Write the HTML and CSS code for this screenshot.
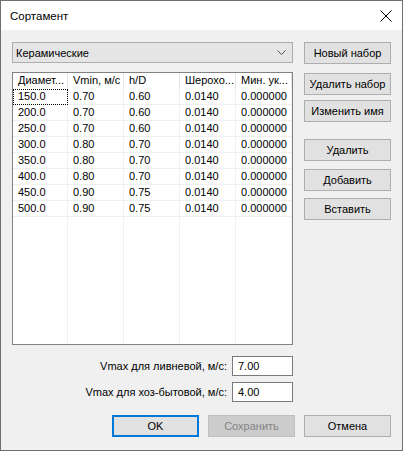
FILE: index.html
```html
<!DOCTYPE html>
<html lang="ru">
<head>
<meta charset="utf-8">
<title>Сортамент</title>
<link rel="stylesheet" href="styles.css">
</head>
<body>
<div class="window">
  <div class="titlebar">
    <span class="title">Сортамент</span>
    <svg class="close" width="12" height="12" viewBox="0 0 12 12"><path d="M0.5 0.5 L11.5 11.5 M11.5 0.5 L0.5 11.5" stroke="#000" stroke-width="1" fill="none"/></svg>
  </div>
  <div class="content">
    <div class="main">
      <div class="left">
        <div class="combo">
          <span>Керамические</span>
          <svg class="chev" width="9" height="5" viewBox="0 0 9 5"><path d="M0.5 0.5 L4.5 4.5 L8.5 0.5" stroke="#555" stroke-width="1" fill="none"/></svg>
        </div>
        <div class="table">
          <div class="row head">
            <div class="cell">Диамет...</div>
            <div class="cell">Vmin, м/с</div>
            <div class="cell">h/D</div>
            <div class="cell">Шерохо...</div>
            <div class="cell">Мин. ук...</div>
          </div>
          <div class="row body focus-row">
            <div class="cell focus">150.0</div><div class="cell">0.70</div><div class="cell">0.60</div><div class="cell">0.0140</div><div class="cell">0.000000</div>
          </div>
          <div class="row body">
            <div class="cell">200.0</div><div class="cell">0.70</div><div class="cell">0.60</div><div class="cell">0.0140</div><div class="cell">0.000000</div>
          </div>
          <div class="row body">
            <div class="cell">250.0</div><div class="cell">0.70</div><div class="cell">0.60</div><div class="cell">0.0140</div><div class="cell">0.000000</div>
          </div>
          <div class="row body">
            <div class="cell">300.0</div><div class="cell">0.80</div><div class="cell">0.70</div><div class="cell">0.0140</div><div class="cell">0.000000</div>
          </div>
          <div class="row body">
            <div class="cell">350.0</div><div class="cell">0.80</div><div class="cell">0.70</div><div class="cell">0.0140</div><div class="cell">0.000000</div>
          </div>
          <div class="row body">
            <div class="cell">400.0</div><div class="cell">0.80</div><div class="cell">0.70</div><div class="cell">0.0140</div><div class="cell">0.000000</div>
          </div>
          <div class="row body">
            <div class="cell">450.0</div><div class="cell">0.90</div><div class="cell">0.75</div><div class="cell">0.0140</div><div class="cell">0.000000</div>
          </div>
          <div class="row body">
            <div class="cell">500.0</div><div class="cell">0.90</div><div class="cell">0.75</div><div class="cell">0.0140</div><div class="cell">0.000000</div>
          </div>
          <div class="row filler">
            <div class="cell"></div><div class="cell"></div><div class="cell"></div><div class="cell"></div><div class="cell"></div>
          </div>
        </div>
        <div class="field f1">
          <span class="label">Vmax для ливневой, м/с:</span>
          <div class="input">7.00</div>
        </div>
        <div class="field f2">
          <span class="label">Vmax для хоз-бытовой, м/с:</span>
          <div class="input">4.00</div>
        </div>
      </div>
      <div class="right">
        <div class="btn b1">Новый набор</div>
        <div class="btn b2">Удалить набор</div>
        <div class="btn b3">Изменить имя</div>
        <div class="btn b4">Удалить</div>
        <div class="btn b5">Добавить</div>
        <div class="btn b6">Вставить</div>
      </div>
    </div>
    <div class="footer">
      <div class="btn default">OK</div>
      <div class="btn disabled">Сохранить</div>
      <div class="btn">Отмена</div>
    </div>
  </div>
</div>
</body>
</html>
```

FILE: styles.css
```css
* { box-sizing: border-box; }
html, body { margin: 0; padding: 0; }
body {
  font-family: "Liberation Sans", Arial, sans-serif;
  font-size: 11px;
  color: #000;
  background: #f0f0f0;
}
.window {
  width: 403px;
  height: 451px;
  border: 1px solid #6f6f6f;
  background: #f0f0f0;
  display: flex;
  flex-direction: column;
}
.titlebar {
  height: 29px;
  background: #fff;
  display: flex;
  align-items: center;
  justify-content: space-between;
  padding: 0 10px 0 9px;
  flex: none;
}
.title { font-size: 11.5px; margin-top: 1px; }
.close { display: block; margin-top: 1px; }
.content {
  flex: 1;
  padding: 12px 11px 0 11px;
  display: flex;
  flex-direction: column;
}
.main {
  display: flex;
  gap: 11px;
}
.left {
  width: 281px;
  display: flex;
  flex-direction: column;
}
.right {
  width: 87px;
  display: flex;
  flex-direction: column;
}
.combo {
  height: 21px;
  border: 1px solid #adadad;
  background: #e5e5e5;
  display: flex;
  align-items: center;
  justify-content: space-between;
  padding: 0 6px 0 3px;
}
.chev { display: block; }
.table {
  margin-top: 9px;
  height: 273px;
  border: 1px solid #828282;
  background: #fff;
  display: flex;
  flex-direction: column;
}
.row {
  display: grid;
  grid-template-columns: 55px 56px 56px 56px 56px;
  flex: none;
}
.row .cell {
  height: 16px;
  line-height: 15px;
  padding-left: 5px;
  white-space: nowrap;
  overflow: hidden;
  border-right: 1px solid #f0f0f0;
  border-bottom: 1px solid #f0f0f0;
}
.row.head .cell {
  border-right-color: #e5e5e5;
  border-bottom: none;
  padding-left: 5px;
}
.row .cell.focus {
  outline: 1px dotted #000;
  outline-offset: -1px;
  border-bottom-color: transparent;
}
.row.filler { flex: 1; }
.row.filler .cell { height: auto; border-bottom: none; }
.field {
  display: flex;
  justify-content: flex-end;
  align-items: center;
  gap: 5px;
  height: 20px;
}
.f1 { margin-top: 11px; }
.f2 { margin-top: 6px; }
.input {
  width: 61px;
  height: 20px;
  border: 1px solid #7a7a7a;
  background: #fff;
  padding-left: 5px;
  line-height: 18px;
}
.btn {
  width: 87px;
  height: 22px;
  border: 1px solid #adadad;
  background: #e1e1e1;
  display: flex;
  align-items: center;
  justify-content: center;
  white-space: nowrap;
}
.b2 { margin-top: 9px; }
.b3 { margin-top: 5px; }
.b4 { margin-top: 17px; }
.b5 { margin-top: 8px; }
.b6 { margin-top: 7px; }
.footer {
  margin-top: 13px;
  display: flex;
  justify-content: flex-end;
  gap: 9px;
}
.btn.default { border: 2px solid #0078d7; }
.btn.disabled {
  background: #cccccc;
  border-color: #bfbfbf;
  color: #838383;
}
```
